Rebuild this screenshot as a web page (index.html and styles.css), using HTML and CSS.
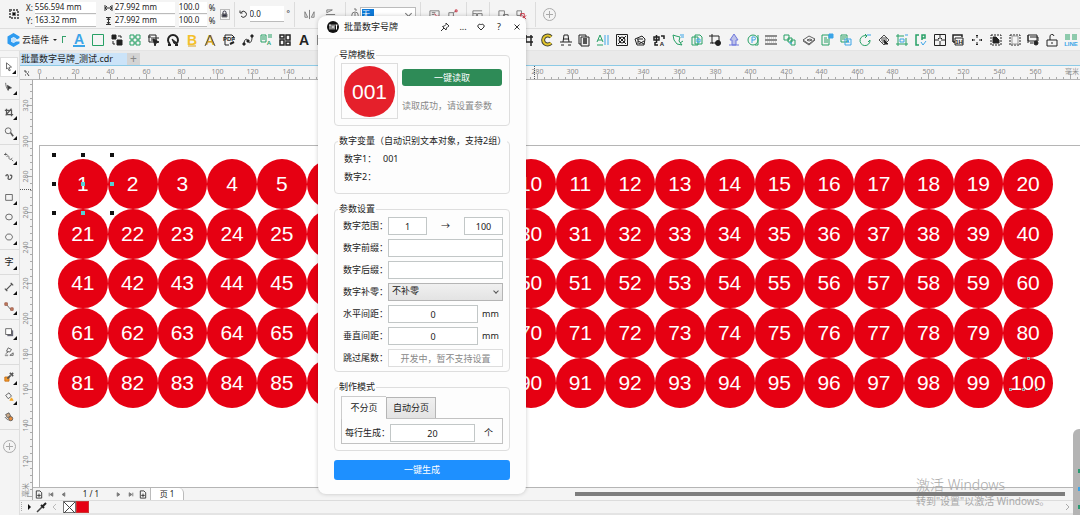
FILE: index.html
```html
<!DOCTYPE html>
<html lang="zh-CN">
<head>
  <meta charset="UTF-8" />
  <meta name="viewport" content="width=device-width, initial-scale=1.0" />
  <title>批量数字号牌</title>
  <link rel="stylesheet" href="styles.css">
</head>
<body>
  <div class="property-bar">
    <svg class="origin-icon" width="10" height="10" viewBox="0 0 10 10"><path d="M1 1h8v8H1z" fill="none" stroke="#666" stroke-width="2" stroke-dasharray="2 1" /><path d="M3.500 3.500h3v3h-3z" fill="#111" /></svg>
    <div class="field-pair pos">
      <label>X: <input type="text" value="556.594 mm" /></label>
      <label>Y: <input type="text" value="163.32 mm" /></label>
    </div>
    <div class="field-pair size">
      <label><svg width="9" height="8" viewBox="0 0 9 8"><path d="M1 1v6M8 1v6M1 4h7M3 2L1 4l2 2M6 2l2 2-2 2" /></svg><input type="text" value="27.992 mm" aria-label="宽" /></label>
      <label><svg width="9" height="8" viewBox="0 0 9 8"><path d="M2 0.500h5M2 7.500h5M4.500 1v6M3 3l1.500-2L6 3M3 5l1.500 2L6 5" /></svg><input type="text" value="27.992 mm" aria-label="高" /></label>
    </div>
    <div class="field-pair scale">
      <label><input type="text" value="100.0" /> %</label>
      <label><input type="text" value="100.0" /> %</label>
    </div>
    <button class="lock" aria-label="锁定比率"><svg width="7" height="8" viewBox="0 0 7 8"><path d="M1 4h5v3H1z" fill="#334" /><path d="M2 4V2.500a1.500 1.500 0 0 1 3 0V4" fill="none" stroke="#334" /></svg></button>
    <span class="bar-sep"></span>
    <label class="rotate"><svg width="8" height="8" viewBox="0 0 8 8"><path d="M2 2.500A3 3 0 1 1 2 6M1 0.500v2.500h2.500" /></svg><input type="text" value="0.0" aria-label="旋转" /><span>°</span></label>
    <span class="bar-sep"></span>
    <div class="bar-icons">
      <button aria-label="水平镜像"><svg viewBox="0 0 12 12"><path d="M1 3v6h3zM11 3v6H8zM6 1v10" /></svg></button>
      <button aria-label="垂直镜像"><svg viewBox="0 0 12 12"><path d="M2 1h6L2 4zM2 11h6L2 8zM1 6h10" /></svg></button>
    </div>
    <span class="bar-sep"></span>
    <svg class="pen-icon" width="10" height="12" viewBox="0 0 10 12"><path d="M4 1h2v2M5 4a3 3 0 1 1 0 6.500A3 3 0 1 1 5 4zM5 5v3" /></svg>
    <label class="outline-box"><input type="text" value="无" aria-label="轮廓宽度" /></label>
    <span class="bar-sep"></span>
    <div class="bar-icons tight">
      <button aria-label="换行"><svg viewBox="0 0 12 12"><path d="M1 2h10v7H1zM3 4h4M3 6h3" /><path d="M6 5l4 5M10 7v3H7" stroke="#c34" /></svg></button>
      <button aria-label="转曲"><svg viewBox="0 0 12 12"><path d="M2 4h5v5H2zM7 4l3-2" /><path d="M9 1h2v2H9zM6 8h2v2H6z" stroke="#c34" /></svg></button>
    </div>
    <span class="bar-sep"></span>
    <div class="bar-icons one">
      <button aria-label="对象"><svg viewBox="0 0 12 12"><path d="M1 2h10M1 5h4v5M1 8h4M6 5h5v5H6zM1 2v8" /></svg></button>
    </div>
    <span class="bar-sep"></span>
    <div class="bar-icons tight">
      <button aria-label="组合"><svg viewBox="0 0 12 12"><path d="M1 2h6v6H1zM6 6h5v4H6z" /></svg></button>
      <button aria-label="取消组合"><svg viewBox="0 0 12 12"><path d="M1 2h5v5H1z" /><path d="M5 5h4v4H5zM7 7l4 4M11 7l-4 4" stroke="#c34" /></svg></button>
    </div>
    <span class="bar-sep"></span>
    <button class="add-round" aria-label="添加"><svg width="13" height="13" viewBox="0 0 13 13"><circle cx="6.500" cy="6.500" r="6" /><path d="M6.500 3v7M3 6.500h7" /></svg></button>
  </div>

  <div class="plugin-bar">
    <button class="cloud">
      <svg width="13" height="14" viewBox="0 0 13 14"><path d="M6.500 0L12.500 3.500V5L10 6.500 8.500 5 6.500 4 4 5.500v3l2.500 1.500L9 8.500h3.500v2L6.500 14 0.500 10.500v-7z" fill="#2e9bf0" /><path d="M6.500 4.500L9 6v2l-2.500 2L4 8V6z" fill="#bfe2ff" /></svg>
      云插件 <span class="caret"></span>
    </button>
    <span class="corner-mark"></span>
    <div class="plugin-icons" id="pluginIcons"></div>
  </div>

  <div class="main">
    <div class="toolbox">
      <button class="tool active fly" aria-label="选择"><svg viewBox="0 0 12 12"><path d="M3 1l6 5-3 .5L7.500 10 6 10.500 4.500 7 3 8.500z" /></svg></button>
      <button class="tool fly" aria-label="形状"><svg viewBox="0 0 12 12"><path d="M2 1c0 3 1 6 3 9" /><path d="M4 4l5 3-3 1-1 2z" fill="#333" /></svg></button>
      <hr />
      <button class="tool fly" aria-label="裁剪"><svg viewBox="0 0 12 12"><path d="M1 4h8v7M3 2v7h8M2 10l7-8" stroke-width="1.500" /></svg></button>
      <button class="tool fly" aria-label="缩放"><svg viewBox="0 0 12 12"><circle cx="5" cy="4.500" r="3.500" /><path d="M8 7l3 4" stroke-width="2" /></svg></button>
      <hr />
      <button class="tool fly" aria-label="手绘"><svg viewBox="0 0 12 12"><path d="M2 1v3M0 3h4M3 6c2-3 3-1 3 1s2 3 4 0M9 9l2 2" /></svg></button>
      <button class="tool" aria-label="艺术笔"><svg viewBox="0 0 12 12"><path d="M2 5c2-4 4 0 3 2s3 3 4 0 0-4-2-3" stroke-width="1.500" /></svg></button>
      <button class="tool fly" aria-label="矩形"><svg viewBox="0 0 12 12"><path d="M2 3h8v7H2z" /></svg></button>
      <button class="tool fly" aria-label="椭圆"><svg viewBox="0 0 12 12"><ellipse cx="6" cy="6" rx="4" ry="3.500" /></svg></button>
      <button class="tool fly" aria-label="多边形"><svg viewBox="0 0 12 12"><path d="M4 2.500h4L10 5v2L8 9.500H4L2 7V5z" /></svg></button>
      <hr />
      <button class="tool fly letter">字</button>
      <hr />
      <button class="tool fly" aria-label="平行度量"><svg viewBox="0 0 12 12"><path d="M2 10l8-8M1 8l3 3M8 1l3 3" stroke-width="1.500" /></svg></button>
      <button class="tool fly" aria-label="连接器"><svg viewBox="0 0 12 12"><path d="M3 3l5 6" /><path d="M1 1h3v3H1zM8 7h3v3H8z" fill="#c86" stroke="#954" /></svg></button>
      <hr />
      <button class="tool fly" aria-label="阴影"><svg viewBox="0 0 12 12"><path d="M4 4h7v7H4z" fill="#667" stroke="none" /><path d="M2 2h7v7H2z" fill="#fff" /></svg></button>
      <button class="tool" aria-label="透明度"><svg viewBox="0 0 12 12"><path d="M5 1l4 2-2 3-4-1zM2 8l3-2M7 10h4V7z" /><path d="M1 9h4v2H1z" fill="#999" stroke="none" /></svg></button>
      <hr />
      <button class="tool fly" aria-label="颜色滴管"><svg viewBox="0 0 12 12"><path d="M1 6h5v5H1z" fill="#f39a2b" stroke="#c66b10" /><path d="M4 8l4-4M7 1l4 4M9 3l2-2" stroke-width="2" /></svg></button>
      <button class="tool fly" aria-label="交互式填充"><svg viewBox="0 0 12 12"><path d="M2 4l4-3 3 4-4 3z" /><path d="M7 10l2-3 2 3z" fill="#f5a623" stroke="#f5a623" /></svg></button>
      <button class="tool" aria-label="智能填充"><svg viewBox="0 0 12 12"><path d="M2 3l4-2 2 4-4 2z" fill="#ca8" /><circle cx="8" cy="8" r="2.500" fill="#e88b3a" /><path d="M1 6l4 4" /></svg></button>
      <hr />
      <button class="tool plus" aria-label="自定义"><svg viewBox="0 0 13 13"><circle cx="6.500" cy="6.500" r="6" /><path d="M6.500 3v7M3 6.500h7" /></svg></button>
    </div>

    <div class="workspace">
      <div class="doc-tabs">
        <button class="doc-tab">批量数字号牌_测试.cdr</button>
        <button class="new-tab">+</button>
      </div>

      <div class="ruler-row">
        <div class="ruler-corner"><svg width="7" height="7" viewBox="0 0 7 7"><path d="M1 1h2v2M4 3l2 3M2 5h1M5 2h1" fill="none" stroke="#444" /></svg></div>
        <svg class="ruler-x" id="rulerX"></svg>
      </div>

      <div class="view">
        <svg class="ruler-y" id="rulerY"></svg>
        <div class="stage">
          <div class="canvas">
            <div class="page"></div>
            <div class="discs" id="discs"></div>
            <div class="handles" id="handles"></div>
          </div>
          <div class="page-nav">
            <button aria-label="加页"><svg viewBox="0 0 8 10"><path d="M1 1h4l2 2v6H1zM4 4v4M2 6h4" /></svg></button>
            <button class="pale" aria-label="首页"><svg viewBox="0 0 8 10"><path d="M2 3v4" /><path d="M6 3v4L3 5z" fill="#777" /></svg></button>
            <button class="pale" aria-label="上一页"><svg viewBox="0 0 8 10"><path d="M6 3v4L3 5z" fill="#777" /></svg></button>
            <span class="page-count">1 / 1</span>
            <button class="pale" aria-label="下一页"><svg viewBox="0 0 8 10"><path d="M2 3v4l3-2z" fill="#777" /></svg></button>
            <button class="pale" aria-label="末页"><svg viewBox="0 0 8 10"><path d="M6 3v4" /><path d="M2 3v4l3-2z" fill="#777" /></svg></button>
            <button aria-label="加页"><svg viewBox="0 0 8 10"><path d="M1 1h4l2 2v6H1zM4 4v4M2 6h4" /></svg></button>
            <button class="page-tab">页 1</button>
            <div class="scrollbar"><div class="thumb"></div></div>
          </div>
        </div>
      </div>

      <div class="palette">
        <svg width="16" height="12" viewBox="0 0 16 12"><path d="M1.500 1v10" stroke="#aaa" stroke-dasharray="1 1" /><path d="M8 3v6l3-3z" fill="#111" /></svg>
        <svg width="12" height="12" viewBox="0 0 12 12"><path d="M1 11l5-5" stroke="#444" stroke-width="1.500" /><path d="M5 4l3 3M7 5l3-3" stroke="#222" stroke-width="2" /></svg>
        <svg width="12" height="12" viewBox="0 0 12 12"><path d="M8 3L5 6l3 3" fill="none" stroke="#bbb" /></svg>
        <button class="swatch none" aria-label="无色"><svg width="11" height="11" viewBox="0 0 11 11"><path d="M0 0l11 11M11 0L0 11" stroke="#444" /></svg></button>
        <button class="swatch red" aria-label="红"></button>
        <svg class="palette-end" width="6" height="12" viewBox="0 0 6 12"><path d="M1 3l3 3-3 3" fill="none" stroke="#aaa" /></svg>
      </div>
    </div>
  </div>

  <form class="dialog">
    <div class="dialog-head">
      <svg width="12" height="12" viewBox="0 0 12 12"><circle cx="6" cy="6" r="6" fill="#111" /><path d="M2 4h2M3 4v4.500M5 3.500v5M7 3.500v5M5 6h2M8.500 4h2M9.500 4v4.500" stroke="#fff" /></svg>
      <h1>批量数字号牌</h1>
      <button type="button" aria-label="置顶"><svg viewBox="0 0 10 10"><path d="M6 1l3 3-1 .5-1.500 1.500-.5 2L2.500 4.500l2-.5L6 2.500zM4 6L1 9" /></svg></button>
      <button type="button">...</button>
      <button type="button" aria-label="收藏"><svg viewBox="0 0 10 10"><path d="M5 8L2 5C1 3 4 1 5 3c1-2 4 0 3 2z" /></svg></button>
      <button type="button">?</button>
      <button type="button" aria-label="关闭"><svg viewBox="0 0 10 10"><path d="M2.500 2.500l5 5M7.500 2.500l-5 5" /></svg></button>
    </div>

    <div class="dialog-body">
      <fieldset class="template">
        <legend>号牌模板</legend>
        <div class="preview"><span>001</span></div>
        <div class="read">
          <button type="button" class="btn-read">一键读取</button>
          <p>读取成功，请设置参数</p>
        </div>
      </fieldset>

      <fieldset class="vars">
        <legend>数字变量（自动识别文本对象，支持2组）</legend>
        <div class="var-row"><span>数字1：</span><span>001</span></div>
        <div class="var-row"><span>数字2：</span><span></span></div>
      </fieldset>

      <fieldset class="params">
        <legend>参数设置</legend>
        <div class="row">
          <label for="from">数字范围：</label>
          <input type="text" class="short" id="from" value="1" />
          <span class="arrow">→</span>
          <input type="text" class="short" value="100" aria-label="结束" />
        </div>
        <div class="row"><label for="prefix">数字前缀：</label><input type="text" id="prefix" /></div>
        <div class="row"><label for="suffix">数字后缀：</label><input type="text" id="suffix" /></div>
        <div class="row">
          <label for="pad">数字补零：</label>
          <div class="select-wrap"><select id="pad"><option>不补零</option></select></div>
        </div>
        <div class="row"><label for="gapX">水平间距：</label><input type="text" id="gapX" value="0" /><span class="unit">mm</span></div>
        <div class="row"><label for="gapY">垂直间距：</label><input type="text" id="gapY" value="0" /><span class="unit">mm</span></div>
        <div class="row"><label for="skip">跳过尾数：</label><input type="text" id="skip" value="开发中，暂不支持设置" disabled /></div>
      </fieldset>

      <fieldset class="mode">
        <legend>制作模式</legend>
        <div class="tabs">
          <button type="button" class="tab selected">不分页</button>
          <button type="button" class="tab">自动分页</button>
        </div>
        <div class="tab-panel">
          <label for="perRow">每行生成：</label>
          <input type="text" id="perRow" value="20" />
          <span>个</span>
        </div>
      </fieldset>

      <button type="button" class="btn-make">一键生成</button>
    </div>
  </form>

  <div class="watermark">
    <strong>激活 Windows</strong>
    <span>转到"设置"以激活 Windows。</span>
  </div>
  <div class="side-dock"><i></i><i></i><i></i></div>

  <script src="script.js"></script>
</body>
</html>
```

FILE: styles.css
```css
* {
  box-sizing: border-box;
}
body {
  margin: 0;
  height: 100vh;
  display: flex;
  flex-direction: column;
  overflow: hidden;
  position: relative;
  background: #f4f4f4;
  color: #222;
  font-family: "Noto Sans", "Noto Sans CJK SC", sans-serif;
  font-size: 9px;
  line-height: 12px;
}
button, input, select {
  font: inherit;
  color: inherit;
  margin: 0;
  padding: 0;
  border: none;
  border-radius: 0;
  background: none;
}
svg {
  display: block;
  flex: none;
}

/* property bar */
.property-bar {
  display: flex;
  align-items: center;
  height: 29px;
  flex: none;
  padding-left: 9px;
  border-bottom: 1px solid #dedede;
  font-size: 8px;
}
.property-bar svg {
  fill: none;
  stroke: #777;
}
.field-pair {
  display: flex;
  flex-direction: column;
  gap: 1px;
}
.field-pair label {
  display: flex;
  align-items: center;
  gap: 2px;
}
.field-pair input {
  height: 12px;
  background: #fff;
  border-bottom: 1px solid #bbb;
}
.pos {
  margin-left: 7px;
}
.pos input {
  width: 61px;
}
.size {
  margin-left: 8px;
}
.size svg {
  stroke: #333;
}
.size input {
  width: 60px;
}
.scale {
  margin-left: 4px;
}
.scale input {
  width: 28px;
}
.lock {
  display: flex;
  justify-content: center;
  align-items: center;
  width: 10px;
  height: 11px;
  margin-left: 4px;
  border: 1px solid #bbb;
}
.bar-sep {
  width: 1px;
  height: 25px;
  margin: 0 4px;
  background: #dcdcdc;
}
.rotate {
  display: flex;
  align-items: center;
  gap: 3px;
}
.rotate svg {
  stroke: #333;
}
.rotate input {
  width: 34px;
  height: 16px;
  background: #fff;
  border-bottom: 1px solid #bbb;
}
.bar-icons {
  display: flex;
  width: 42px;
  justify-content: space-around;
}
.bar-icons.tight {
  width: 37px;
}
.bar-icons.one {
  width: 14px;
}
.bar-icons svg {
  width: 11px;
  height: 11px;
}
.outline-box {
  display: flex;
  width: 56px;
  height: 15px;
  padding: 1px;
  border: 1px solid #bbb;
  background: #fff;
  position: relative;
}
.outline-box input {
  width: 12px;
  background: #0f7ad8;
  color: #fff;
}
.outline-box::after {
  content: "";
  position: absolute;
  right: 4px;
  top: 3px;
  width: 4px;
  height: 4px;
  border: solid #777;
  border-width: 0 1px 1px 0;
  transform: rotate(45deg);
}
.add-round {
  margin-left: 3px;
}
.property-bar .add-round svg {
  stroke: #aaa;
}

/* plugin bar */
.plugin-bar {
  display: flex;
  align-items: center;
  height: 22px;
  flex: none;
  padding-left: 7px;
  border-bottom: 1px solid #e4e4e4;
}
.cloud {
  display: flex;
  align-items: center;
  gap: 2px;
}
.caret {
  border: 2px solid transparent;
  border-top-color: #222;
  margin: 2px 0 0 2px;
}
.corner-mark {
  width: 4px;
  height: 7px;
  margin: 0 4px 0 5px;
  border: solid #35a06b;
  border-width: 1px 0 0 1px;
}
.plugin-icons {
  display: flex;
  flex: 1;
}
.plugin-icons button {
  display: flex;
  justify-content: center;
  flex: 1 1 0;
}
.plugin-icons svg {
  width: 12px;
  height: 12px;
  fill: none;
  stroke: currentColor;
  overflow: visible;
}
.plugin-icons text {
  stroke: none;
  fill: currentColor;
  font: bold 14px "Liberation Sans", sans-serif;
  text-anchor: middle;
}
.plugin-icons text.tiny {
  font-size: 6px;
}
.plugin-icons .solid {
  fill: currentColor;
}
.dark { color: #222; }
.green { color: #27a065; }
.blue { color: #3ba4e8; }
.gold { color: #d9a520; }
.violet { color: #6f78dc; }

/* toolbox */
.main {
  display: flex;
  flex: 1;
  min-height: 0;
}
.toolbox {
  display: flex;
  flex-direction: column;
  width: 20px;
  flex: none;
  padding-top: 6px;
  border-right: 1px solid #dedede;
}
.toolbox hr {
  width: 100%;
  height: 1px;
  margin: 2px 0;
  border: none;
  background: #dcdcdc;
}
.tool {
  position: relative;
  display: flex;
  justify-content: center;
  align-items: center;
  width: 18px;
  height: 20px;
  flex: none;
}
.tool svg {
  width: 10px;
  height: 10px;
  fill: none;
  stroke: #555;
}
.tool.active {
  background: #fff;
  border: 1px solid #ddd;
}
.tool.fly::after {
  content: "";
  position: absolute;
  right: 1px;
  bottom: 2px;
  border: 2px solid #111;
  border-top-color: transparent;
  border-left-color: transparent;
}
.tool.plus {
  height: 28px;
}
.tool.plus svg {
  width: 13px;
  height: 13px;
  stroke: #aaa;
}

/* document tabs and rulers */
.workspace {
  display: flex;
  flex-direction: column;
  flex: 1;
  min-width: 0;
}
.doc-tabs {
  display: flex;
  height: 15px;
  flex: none;
  padding-top: 2px;
  background: #eaeaea;
  border-bottom: 1px solid #8ccae6;
}
.doc-tab {
  width: 107px;
  background: #cbe3f8;
  text-align: left;
  padding-left: 1px;
  white-space: nowrap;
}
.new-tab {
  width: 13px;
  background: #d4d4d4;
  color: #888;
  font-size: 12px;
}
.ruler-row {
  display: flex;
  height: 14px;
  flex: none;
  border-bottom: 1px solid #b5b5b5;
}
.ruler-corner {
  width: 12px;
  padding: 4px 0 0 3px;
}
.ruler-x {
  flex: 1;
  min-width: 0;
  height: 13px;
}
.ruler-x text, .ruler-y text {
  font-size: 7px;
  fill: #8d8d8d;
  text-anchor: middle;
}
.ruler-x path, .ruler-y path {
  stroke: #aaa;
}
.ruler-x .cursor, .ruler-y .cursor {
  stroke: #555;
  stroke-dasharray: 1 1;
}
.view {
  display: flex;
  flex: 1;
  min-height: 0;
}
.ruler-y {
  width: 13px;
  height: 100%;
  border-right: 1px solid #aaa;
}
.stage {
  display: flex;
  flex-direction: column;
  flex: 1;
  min-width: 0;
}
.canvas {
  position: relative;
  flex: 1;
  padding: 79px 27px 0 25px;
  background: #fff;
  overflow: hidden;
}
.page {
  position: absolute;
  inset: 65px 0 0 6px;
  border: solid #b5b5b5;
  border-width: 1px 0 0 1px;
}
.discs {
  position: relative;
  display: grid;
  grid-template-columns: repeat(20, 1fr);
}
.disc {
  display: flex;
  justify-content: center;
  align-items: center;
  aspect-ratio: 1;
  border-radius: 50%;
  background: #e60012;
  color: #fff;
  font: 21px/24px "Liberation Sans", sans-serif;
}
.handles i {
  position: absolute;
  width: 4px;
  height: 4px;
  background: #111;
}
.handles .cyan {
  background: #55cfd3;
}
.handles .node {
  width: 3px;
  height: 3px;
  background: #555;
  border: 1px solid #aaa;
}

/* page navigation */
.page-nav {
  display: flex;
  align-items: center;
  height: 13px;
  flex: none;
  border-top: 1px solid #b5b5b5;
  font-size: 8px;
}
.page-nav button {
  width: 12px;
  flex: none;
}
.page-nav svg {
  width: 8px;
  height: 9px;
  margin: 0 auto;
  fill: none;
  stroke: #333;
}
.page-nav .pale svg {
  stroke: #777;
}
.page-count {
  width: 44px;
  text-align: center;
}
.page-nav .page-tab {
  width: 34px;
  height: 12px;
  margin-left: 1px;
  background: #fff;
  border: solid #bbb;
  border-width: 0 1px;
  border-top-right-radius: 5px;
}
.scrollbar {
  flex: 1;
  margin: 0 15px 0 391px;
}
.thumb {
  height: 4px;
  background: #7d7d7d;
}
.palette {
  display: flex;
  align-items: center;
  height: 15px;
  flex: none;
  border-top: 1px solid #dcdcdc;
  border-bottom: 2px solid #e4e4e4;
}
.swatch {
  width: 13px;
  height: 12px;
  border: 1px solid #777;
}
.swatch.none {
  margin-left: 3px;
  background: #fff;
}
.swatch.red {
  background: #e60012;
  border-color: #c33;
}
.palette-end {
  margin: 0 9px 0 auto;
}

/* dialog */
.dialog {
  position: absolute;
  left: 318px;
  top: 16px;
  width: 208px;
  background: #fdfdfd;
  border-radius: 8px;
  box-shadow: 0 0 4px rgba(0, 0, 0, 0.2);
}
.dialog-head {
  display: flex;
  align-items: center;
  height: 23px;
  padding-left: 9px;
  border-bottom: 1px solid #e8e8e8;
}
.dialog-head h1 {
  flex: 1;
  margin: 0 0 0 5px;
  font-size: 9px;
  font-weight: normal;
}
.dialog-head button {
  width: 18px;
}
.dialog-head button svg {
  width: 10px;
  height: 10px;
  margin: 0 auto;
  fill: none;
  stroke: #333;
}
.dialog-body {
  display: flex;
  flex-direction: column;
  gap: 9px;
  padding: 10px 16px 14px;
}
fieldset {
  min-width: 0;
  margin: 0;
  padding: 0 6px;
  border: 1px solid #dedede;
  border-radius: 4px;
}
legend {
  height: 12px;
  margin-left: -3px;
  padding: 0 1px;
  white-space: nowrap;
}
.dialog fieldset input {
  width: 100%;
  min-width: 0;
  height: 18px;
  border: 1px solid #c2c7c7;
  background: #fff;
  text-align: center;
}
.template {
  display: flex;
  gap: 4px;
  padding: 2px 7px 6px 6px;
}
.preview {
  display: flex;
  justify-content: center;
  align-items: center;
  width: 57px;
  height: 56px;
  flex: none;
  border: 1px solid #ddd;
}
.preview span {
  width: 51px;
  border-radius: 50%;
  background: #e5202b;
  color: #fff;
  font: 21px/51px "Liberation Sans", sans-serif;
  text-align: center;
}
.read {
  flex: 1;
  padding-top: 6px;
}
.btn-read {
  width: 100%;
  height: 17px;
  border-radius: 3px;
  background: #2e8b57;
  color: #fff;
}
.read p {
  margin: 14px 0 0;
  color: #888;
  white-space: nowrap;
}
.vars {
  padding: 3px 6px 7px;
}
.var-row {
  display: flex;
  height: 18px;
  align-items: center;
  padding-left: 3px;
}
.var-row span:first-child {
  width: 39px;
}
.params {
  padding-bottom: 2px;
}
.row {
  display: flex;
  align-items: center;
  height: 22px;
  padding-left: 2px;
}
.row label {
  width: 45px;
  flex: none;
  white-space: nowrap;
}
.dialog .row input.short {
  width: 39px;
}
.arrow {
  flex: 1;
  text-align: center;
}
.unit {
  width: 25px;
  flex: none;
  padding-left: 4px;
}
.dialog .row input:disabled {
  color: #888;
  border-color: #ddd;
}
.select-wrap {
  position: relative;
  flex: 1;
}
.select-wrap select {
  display: block;
  width: 100%;
  height: 18px;
  padding: 0 3px 2px;
  appearance: none;
  border: 1px solid #b5b5b5;
  background: linear-gradient(#f0f0f0, #e3e3e3);
}
.select-wrap::after {
  content: "";
  position: absolute;
  right: 5px;
  top: 6px;
  width: 3px;
  height: 3px;
  border: solid #555;
  border-width: 0 1px 1px 0;
  transform: rotate(45deg);
}
.mode {
  padding: 3px 6px 6px;
}
.tabs {
  display: flex;
  align-items: flex-end;
}
.tab {
  width: 50px;
  height: 21px;
  border: 1px solid #b5b5b5;
  border-bottom: none;
  background: linear-gradient(#f0f0f0, #e3e3e3);
}
.tab.selected {
  width: 45px;
  height: 23px;
  margin-bottom: -1px;
  border-right: none;
  border-color: #ccc;
  background: #fdfdfd;
  position: relative;
}
.tab-panel {
  display: flex;
  align-items: center;
  height: 26px;
  padding: 4px 0 0 3px;
  border: 1px solid #c2c2c2;
}
.tab-panel label {
  width: 45px;
  flex: none;
  white-space: nowrap;
}
.tab-panel span {
  width: 27px;
  flex: none;
  text-align: center;
}
.btn-make {
  height: 20px;
  border-radius: 3px;
  background: #1e90ff;
  color: #fff;
}

/* overlays */
.watermark {
  position: absolute;
  right: 24px;
  bottom: 8px;
  width: 140px;
  color: #a9a9a9;
  font-size: 10px;
  white-space: nowrap;
  pointer-events: none;
}
.watermark strong {
  display: block;
  font-size: 14px;
  font-weight: 300;
  line-height: 20px;
}
.side-dock {
  position: absolute;
  right: 0;
  bottom: 0;
  display: flex;
  flex-direction: column;
  align-items: flex-end;
  gap: 14px;
  width: 7px;
  height: 86px;
  padding-top: 40px;
  border-top-left-radius: 6px;
  background: #b4b4b4;
}
.side-dock i {
  width: 2px;
  height: 4px;
  background: #2a9a72;
}
.side-dock i:nth-child(2) {
  background: #3ba4e8;
}
```

FILE: script.js
```js
const MM = 16 / 9; // screen pixels per millimetre at this zoom

// colour class + drawing for each plugin button
const icons = [
  ["blue", '<text x="6" y="10">A</text><path d="M0 12h12" stroke-width="2"/>'],
  ["green", '<path d="M0.500 0.500h11v11H0.500z"/>'],
  ["dark", '<path class="solid" d="M1 1h4v4H1zM6 6h5v5H6z"/><path d="M7 2h3v2M2 7v3h2"/>'],
  ["green", '<path d="M1 1h4v4H1zM7 1h4v4H7zM1 7h4v4H1zM7 7h4v4H7zM5 3h2M5 9h2M3 5v2M9 5v2"/>'],
  ["dark", '<path d="M1 1h7v7H1zM3 4h8M3 6h6M0 3h3"/><path class="solid" d="M5 5l6 3-3 1-1 3z"/>'],
  ["dark", '<path d="M3 10a5 5 0 1 1 6 0M1 11h3M8 11h3" stroke-width="2"/><path class="solid" d="M5 5l5 4-3 .5z"/>'],
  ["gold", '<text x="6" y="11" style="fill:#f3c02c">B</text><path d="M2 12h8"/>'],
  ["gold", '<text x="6" y="11">A</text><path d="M1 12l5-11 5 11" stroke="#555"/>'],
  ["dark", '<path d="M2 11V1h7l2 2v3M2 11h4"/><text class="tiny" x="6" y="7">PDF</text><path d="M7 10l4-2" stroke-width="2"/>'],
  ["dark", '<path d="M2 10c0-5 3-6 4-3s4 2 4-4"/><path class="solid" d="M1 9h2v2H1zM9 1h2v2H9zM5 6h2v2H5z"/>'],
  ["green", '<path d="M1 1h5v7H1zM2 3h3M2 5h3M8 1h4M8 3h4"/><text class="tiny" x="9" y="11">A</text>'],
  ["dark", '<path d="M1 1h4v3H1zM7 1h4v5H7zM1 6h4v5H1zM7 8h4v3H7z" stroke-width="1.500"/>'],
  ["dark", '<text x="6" y="11">A</text>'],
  ["dark", '<path d="M1 1h10v10H1zM3 3h6v6H3z"/>'],
  ["dark", '<path d="M1 1h10v10H1z"/>'],
  ["dark", '<path d="M1 1h10v10H1z"/>'],
  ["dark", '<path d="M1 1h10v10H1z"/>'],
  ["dark", '<path d="M1 1h10v10H1z"/>'],
  ["dark", '<path d="M1 1h10v10H1z"/>'],
  ["dark", '<path d="M1 1h10v10H1z"/>'],
  ["dark", '<path d="M1 1h10v10H1z"/>'],
  ["dark", '<path d="M1 1h10v10H1z"/>'],
  ["dark", '<path d="M1 1h10v10H1z"/>'],
  ["dark", '<path d="M1 1h10v10H1z"/>'],
  ["dark", '<path d="M1 3h10M1 8h10M4 1v6l-2 5M9 1v11" stroke-width="1.500"/>'],
  ["gold", '<path d="M10 3a4.500 4.500 0 1 0 0 6" stroke="#443" stroke-width="4"/><path d="M10 3a4.500 4.500 0 1 0 0 6" stroke="#e3c62c" stroke-width="2"/>'],
  ["dark", '<path d="M4 1h4M3 5h6M0 8h12M1 11h3M8 11h3M4 1L3 8M8 1l1 7"/>'],
  ["dark", '<path d="M1 1h7v9H1z"/><path d="M3 3h8v9H3z" fill="#eee"/><path d="M5 5h4M5 7h4M5 9h4" stroke-width="1.500"/>'],
  ["green", '<path d="M0 8L3 1l3 7M1 6h4M0 11h6"/><path d="M8 1v10M11 1v10" stroke="#3ba4e8"/>'],
  ["dark", '<path d="M0.500 0.500h11v11h-11zM2 2l8 8M10 2l-8 8"/><circle cx="6" cy="6" r="3"/>'],
  ["dark", '<path d="M1 5l7-3 3 3-1 6H3zM3 5h6M4 5v5M4 7l6 3M10 7l-5 3"/>'],
  ["dark", '<path d="M1 3h5v3H1zM3.500 1v8M8 2h3v3M2 8v3h3" stroke-width="1.500"/><text class="tiny" x="9" y="12">A</text>'],
  ["green", '<path d="M1 1l3 1 4 1-1 4 3 4-5-1-3-4zM8 9l3-2"/><path d="M8 1h4M9 3h3" stroke="#3ba4e8"/>'],
  ["green", '<path d="M1 3h6v8H1zM4 1h5l2 2v7H4z"/><path d="M6 5h3v3H6z" stroke="#3ba4e8"/>'],
  ["dark", '<path d="M3 0v9h5M0 2h10v5M1 9h3"/><circle class="solid" cx="9" cy="9" r="2.500"/>'],
  ["violet", '<path class="solid" fill-opacity=".4" d="M6 0l4 6H8v5H4V6H2zM1 11h10"/>'],
  ["green", '<circle cx="6" cy="6" r="5"/><path d="M11 1v10H8"/><path d="M5 9V3h2a1.500 1.500 0 0 1 0 3H5" stroke="#3ba4e8"/>'],
  ["dark", '<path d="M0 2h12M0 6h12M0 10h12"/><path d="M0 4h12M0 8h12" stroke-dasharray="1 1" opacity=".3"/>'],
  ["green", '<path d="M0 1h5v5H0zM4 4h4v4H4zM7 6h4v5H7z"/><path d="M5 9h3" stroke="#3ba4e8"/>'],
  ["dark", '<path d="M0 6l6-4 6 3-6 5zM0 7l6 4 6-5M4 6l3-1 2 1-3 1z" stroke-width=".7"/>'],
  ["green", '<path d="M1 1h7v10H1zM3 4h3M3 6h4M3 8h4"/><path d="M8 0h4v4H8z" fill="#3ba4e8" stroke="#3ba4e8"/>'],
  ["green", '<path d="M1 1h6v7H1zM2 3h4M2 5h3"/><path d="M5 5h6v6H5zM7 9l1-3 1 3" stroke="#3ba4e8"/>'],
  ["green", '<path d="M8 2a5 5 0 1 0 3 4M6 0l2 2-2 2M9 8l2-2"/><path d="M8 1h4" stroke="#3ba4e8"/>'],
  ["dark", '<path d="M6 1l5 5-5 5-5-5zM3 4h6M3 6h6M4 8h5" stroke-width=".8"/><path class="solid" d="M6 6l4 4H7z"/>'],
  ["green", '<path d="M2 0v12M10 4v8M0 2h8M0 10h12"/><path d="M4 5h4v3H4zM9 1h3" stroke="#3ba4e8"/>'],
  ["green", '<path d="M4 1H1v10h3M7 6V1h3v3H7" stroke-width="1.500"/><path d="M6 8l2 3 3-4" stroke="#3ba4e8"/>'],
  ["dark", '<path d="M0.500 0.500h11v11h-11zM6 1v4M6 7v4M1 6h4M7 6h4M4 4l1 1M8 4L7 5"/>'],
  ["dark", '<path d="M1 8V1h9v2M1 8h2" stroke-width="1.500"/><path d="M3 4h8v7H3z"/><text class="tiny" x="7" y="10">1H</text>'],
  ["dark", '<path d="M6 1v3M6 8v3M1 6h3M8 6h3M5 2l1-1 1 1M5 10l1 1 1-1M2 5L1 6l1 1M10 5l1 1-1 1"/>'],
  ["dark", '<path d="M1 1h10v10H1z" stroke-dasharray="2 1"/><path class="solid" d="M3 3h3l3 3v3H3z"/>'],
  ["dark", '<path d="M1 1h10v10H1z" stroke-dasharray="2 1"/><path d="M3 2h6v8H3z" stroke="#999"/>'],
  ["dark", '<path d="M1 1h9v6H1zM3 3h8v4M3 9h3M1 1v8"/><circle class="solid" cx="9" cy="9" r="2"/>'],
  ["dark", '<path d="M1 6h10v6H1zM4 6V3a2 2 0 0 1 4-1M6 8v2"/>'],
  ["green", '<path d="M0 1h5M7 1h5M0 3h5M7 3h5M0 5h5M7 5h5"/><text class="tiny blue" x="6" y="12">LINE</text>']
];

document.getElementById("pluginIcons").innerHTML = icons
  .map(([color, art], i) => `<button class="${color}" aria-label="插件${i + 1}"><svg viewBox="0 0 12 12">${art}</svg></button>`)
  .join("");

// number plates
let discs = "";
for (let n = 1; n <= 100; n++) {
  discs += `<div class="disc">${n}</div>`;
}
document.getElementById("discs").innerHTML = discs;

// selection handles on the canvas: x, y, class
const handles = [
  [19, 73, ""], [48, 73, ""], [77, 73, ""],
  [19, 102, ""], [48, 102, "cyan"], [77, 102, "cyan"],
  [19, 131, ""], [48, 131, "cyan"], [77, 131, ""],
  [976, 308, "node"], [989, 308, "node"], [1002, 308, "node"], [994, 277, "node"]
];
document.getElementById("handles").innerHTML = handles
  .map(([x, y, cls]) => `<i class="${cls}" style="left:${x}px;top:${y}px"></i>`)
  .join("");

// horizontal ruler, zero sits above the page's left edge
let rx = "";
for (let mm = 0; mm <= 584; mm += 4) {
  const x = Math.round(7 + mm * MM) + 0.5;
  const major = mm % 20 === 0;
  rx += `<path d="M${x} 13v${major ? -5 : -2}"/>`;
  if (major && mm < 580) rx += `<text x="${x}" y="8">${mm}</text>`;
}
rx += '<text x="1040" y="8">毫米</text><path class="cursor" d="M502.500 0v13"/>';
document.getElementById("rulerX").innerHTML = rx;

// vertical ruler counts down
let ry = "";
for (let mm = 332; mm >= 100; mm -= 4) {
  const y = Math.round(25 + (320 - mm) * MM) + 0.5;
  const major = mm % 20 === 0;
  ry += `<path d="M12 ${y}h${major ? -5 : -2}"/>`;
  if (major && mm >= 120) ry += `<text transform="translate(8 ${y}) rotate(-90)">${mm}</text>`;
}
ry += '<text transform="translate(8 410) rotate(-90)">毫米</text><path class="cursor" d="M0 109.500h12"/>';
document.getElementById("rulerY").innerHTML = ry;
```
